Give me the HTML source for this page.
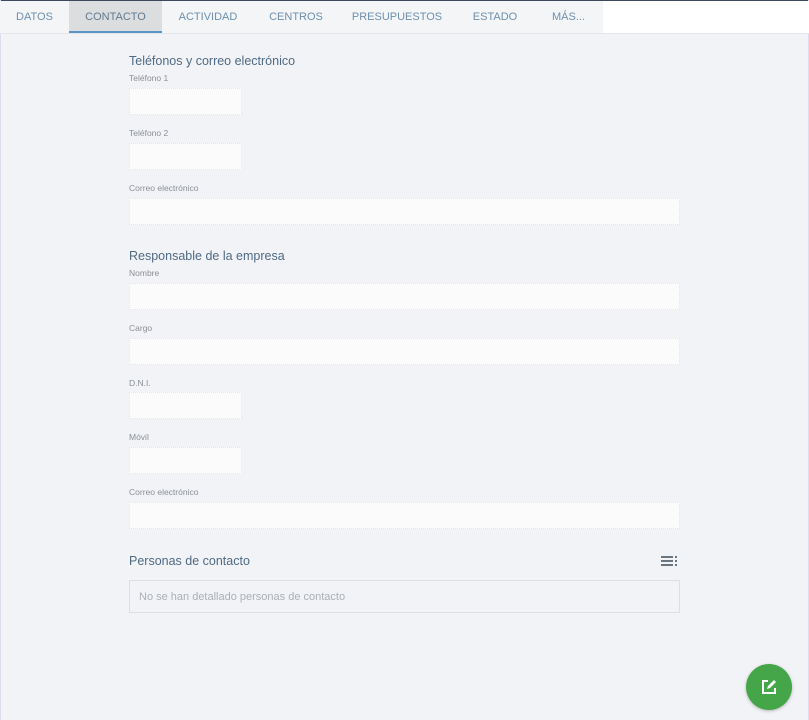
<!DOCTYPE html>
<html><head><meta charset="utf-8"><style>
*{box-sizing:border-box;margin:0;padding:0}
body{width:809px;height:720px;background:#f2f3f6;font-family:"Liberation Sans",sans-serif;position:relative;overflow:hidden}
.bar{position:absolute;top:1px;left:0;width:809px;height:33px;background:#fff;border-bottom:1px solid #e3e5e9}
.tabs{position:absolute;left:0;top:0;width:603px;height:32px;background:#f4f5f7}
.tab{position:absolute;top:1px;height:31px;line-height:31px;font-size:11px;color:#6d8fae;text-align:center}
.act{top:0;height:32px;padding-top:1px;background:#dcdddf;border-bottom:2px solid #5b95c6;color:#5f7a92}
.t{position:absolute;left:129px;font-size:12.5px;color:#4f6a84}
.l{position:absolute;left:129px;font-size:8.5px;color:#8a8f96}
.i{position:absolute;left:129px;height:27px;background:#fbfbfc;border:1px dotted #e3e5ea}
.s{width:113px}.w{width:551px}
</style></head><body>
<div style="position:absolute;left:0;top:0;width:809px;height:1px;background:#3a4a5c"></div>
<div style="position:absolute;left:0;top:0;width:1px;height:720px;background:#dde"></div>
<div style="position:absolute;right:0;top:0;width:1px;height:720px;background:#dde"></div>
<div class="bar"><div class="tabs">
<div class="tab" style="left:0;width:69px">DATOS</div>
<div class="tab act" style="left:69px;width:93px">CONTACTO</div>
<div class="tab" style="left:162px;width:92px">ACTIVIDAD</div>
<div class="tab" style="left:254px;width:84px">CENTROS</div>
<div class="tab" style="left:338px;width:118px">PRESUPUESTOS</div>
<div class="tab" style="left:456px;width:78px">ESTADO</div>
<div class="tab" style="left:534px;width:69px">MÁS...</div>
</div></div>
<div class="t" style="top:54px">Teléfonos y correo electrónico</div>
<div class="l" style="top:73px">Teléfono 1</div><div class="i s" style="top:88px"></div>
<div class="l" style="top:128px">Teléfono 2</div><div class="i s" style="top:143px"></div>
<div class="l" style="top:183px">Correo electrónico</div><div class="i w" style="top:198px"></div>
<div class="t" style="top:249px">Responsable de la empresa</div>
<div class="l" style="top:268px">Nombre</div><div class="i w" style="top:283px"></div>
<div class="l" style="top:323px">Cargo</div><div class="i w" style="top:338px"></div>
<div class="l" style="top:378px">D.N.I.</div><div class="i s" style="top:392px"></div>
<div class="l" style="top:432px">Móvil</div><div class="i s" style="top:447px"></div>
<div class="l" style="top:487px">Correo electrónico</div><div class="i w" style="top:502px"></div>
<div class="t" style="top:554px">Personas de contacto</div>
<svg style="position:absolute;left:661px;top:556px" width="17" height="11"><g fill="#6b7580"><rect x="0" y="0" width="12" height="2"/><rect x="0" y="4" width="12" height="2"/><rect x="0" y="8" width="12" height="2"/><rect x="14" y="0" width="2" height="2"/><rect x="14" y="4" width="2" height="2"/><rect x="14" y="8" width="2" height="2"/></g></svg>
<div style="position:absolute;left:129px;top:580px;width:551px;height:33px;border:1px solid #dcdfe3;background:#f2f3f6;font-size:11px;color:#aab0b7;line-height:32px;padding-left:9px">No se han detallado personas de contacto</div>
<div style="position:absolute;left:746px;top:664px;width:46px;height:46px;border-radius:50%;background:#45a649;box-shadow:0 1px 3px rgba(0,0,0,.25)"><svg style="position:absolute;left:15px;top:15px" width="16" height="16" viewBox="0 0 16 16"><path d="M7 2H2v12h12V9" fill="none" stroke="#fff" stroke-width="2"/><path d="M6 10l1-3 6-6 2 2-6 6z" fill="#fff"/></svg></div>
</body></html>
